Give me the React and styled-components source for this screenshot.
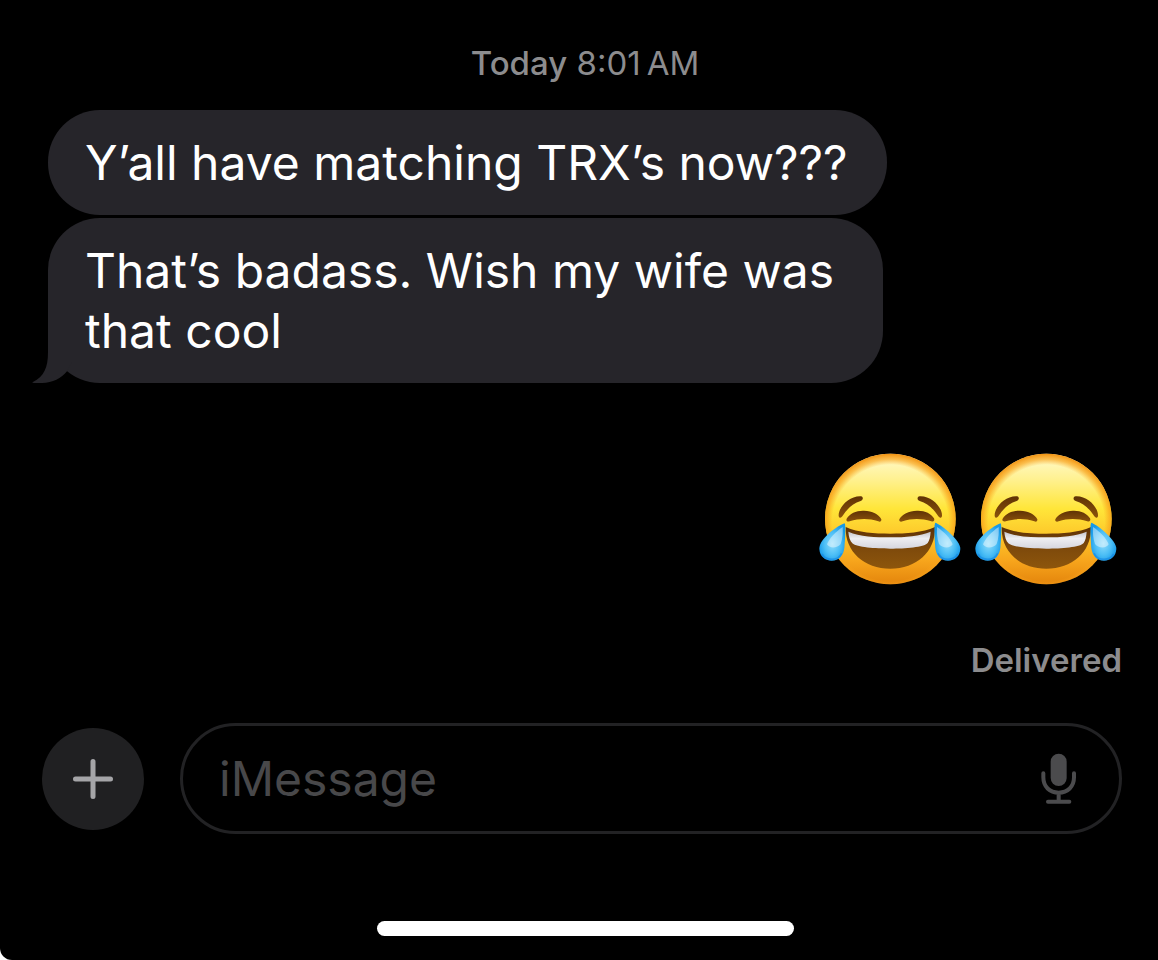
import React from 'react';
import styled, { createGlobalStyle } from 'styled-components';

const messages = [
  { id: 1, text: 'Y’all have matching TRX’s now???' },
  { id: 2, text: 'That’s badass. Wish my wife was that cool', last: true },
];

const App = () => {
  return (
    <>
      <GlobalStyle />
      <Screen>
        <Thread>
          <Timestamp>
            <Day>Today</Day> 8:01&thinsp;AM
          </Timestamp>
          <MessageList>
            {messages.map(({ id, text, last }) => (
              <Bubble key={id} $last={last}>
                {text}
                {last && <BubbleTail />}
              </Bubble>
            ))}
          </MessageList>
          <Reaction>
            <JoyFace id="joy-1" />
            <JoyFace id="joy-2" />
          </Reaction>
          <Status>Delivered</Status>
        </Thread>
        <Composer onSubmit={(event) => event.preventDefault()}>
          <AddButton type="button" aria-label="Add attachment">
            <svg width="40" height="40" viewBox="0 0 40 40" fill="none">
              <path
                d="M20 2.5V37.5M2.5 20H37.5"
                stroke="#a5a5a8"
                strokeWidth="5"
                strokeLinecap="round"
              />
            </svg>
          </AddButton>
          <Field>
            <Input type="text" placeholder="iMessage" aria-label="iMessage" />
            <MicButton type="button" aria-label="Dictate">
              <MicIcon />
            </MicButton>
          </Field>
        </Composer>
        <HomeBar>
          <HomeIndicator />
        </HomeBar>
      </Screen>
    </>
  );
};

const BubbleTail = () => (
  <Tail viewBox="36 377 120 156" aria-hidden="true">
    <path
      d="M84 377V440C84 488 72 513 39 530Q34 533 42 533H66C98 533 124 519 141 498L156 470V377Z"
      fill="#26252a"
    />
  </Tail>
);

const MicIcon = () => (
  <svg width="36" height="52" viewBox="62 115 108 156" fill="none">
    <rect x="91" y="117" width="48" height="97" rx="24" fill="#4b4b4d" />
    <path
      d="M69 176V188C69 216 88 234 115 234S161 216 161 188V176M115 234V260M83 261H147"
      stroke="#4b4b4d"
      strokeWidth="12"
      strokeLinecap="round"
    />
  </svg>
);

const JoyFace = ({ id }) => (
  <svg
    width="142"
    height="132"
    viewBox="28 40 426 396"
    role="img"
    aria-label="Face with tears of joy"
  >
    <defs>
      <linearGradient id={`${id}-skin`} x1="0" y1="0" x2="0" y2="1">
        <stop offset="0" stopColor="#fffad0" />
        <stop offset="0.2" stopColor="#fff18f" />
        <stop offset="0.42" stopColor="#ffe63a" />
        <stop offset="0.62" stopColor="#fdc82a" />
        <stop offset="0.82" stopColor="#f7a51c" />
        <stop offset="1" stopColor="#e4850c" />
      </linearGradient>
      <radialGradient id={`${id}-edge`} cx="0.5" cy="0.53" r="0.53">
        <stop offset="0.84" stopColor="#f9a41c" stopOpacity="0" />
        <stop offset="0.92" stopColor="#f9a41c" stopOpacity="0.7" />
        <stop offset="1" stopColor="#f0900e" stopOpacity="1" />
      </radialGradient>
      <linearGradient id={`${id}-teeth`} x1="0" y1="0" x2="0" y2="1">
        <stop offset="0" stopColor="#c4c4cb" />
        <stop offset="0.4" stopColor="#eeeef2" />
        <stop offset="1" stopColor="#d6d6de" />
      </linearGradient>
      <linearGradient id={`${id}-mouth`} x1="0" y1="0" x2="0" y2="1">
        <stop offset="0" stopColor="#5c3006" />
        <stop offset="0.45" stopColor="#7c480b" />
        <stop offset="1" stopColor="#8d560c" />
      </linearGradient>
      <linearGradient id={`${id}-brow`} x1="0" y1="0" x2="0" y2="1">
        <stop offset="0" stopColor="#5f3205" />
        <stop offset="1" stopColor="#8a520b" />
      </linearGradient>
      <radialGradient id={`${id}-tear`} cx="0.5" cy="0.55" r="0.55">
        <stop offset="0" stopColor="#8fdcfb" />
        <stop offset="0.55" stopColor="#4dbff6" />
        <stop offset="1" stopColor="#1699e8" />
      </radialGradient>
    </defs>
    <circle cx="242" cy="238" r="196" fill={`url(#${id}-skin)`} />
    <circle cx="242" cy="238" r="196" fill={`url(#${id}-edge)`} />
    <g fill={`url(#${id}-brow)`}>
      <path d="M87 228C86 203 119 168 154 170C162 172 161 181 153 184C129 191 113 207 98 230C94 236 88 236 87 228Z" />
      <path d="M397 228C398 203 365 168 330 170C321 172 322 181 330 184C354 191 371 207 386 230C390 236 396 236 397 228Z" />
      <path d="M111 237C120 221 141 212 163 213C188 214 208 224 215 239C216 245 211 248 206 245C177 236 150 236 120 245C113 247 108 243 111 237Z" />
      <path d="M269 239C277 224 297 214 322 213C345 212 364 221 373 236C376 243 372 247 365 245C335 236 307 236 279 245C273 248 267 245 269 239Z" />
    </g>
    <path
      d="M108 262C146 279 194 282 242 282S338 279 376 262C378 337 320 387 242 387S106 337 108 262Z"
      fill={`url(#${id}-mouth)`}
    />
    <path
      d="M116 276C151 291 197 293 242 293S331 290 363 276C362 291 359 303 354 310C343 323 287 327 242 327S142 323 128 311C121 303 117 291 116 276Z"
      fill={`url(#${id}-teeth)`}
    />
    <path
      d="M105 251C86 257 28 296 29 328C30 350 46 363 66 363C88 363 101 348 104 325C106 302 109 257 105 251Z"
      fill={`url(#${id}-tear)`}
    />
    <path
      d="M377 249C396 256 453 301 452 328C451 350 435 363 415 363C393 363 380 348 377 325C375 302 372 256 377 249Z"
      fill={`url(#${id}-tear)`}
    />
    <g fill="#ffffff" fillOpacity="0.45">
      <path d="M99 262C78 276 58 297 52 314C58 327 84 326 93 313C99 297 100 277 99 262Z" />
      <path d="M382 262C403 276 423 297 429 314C423 327 397 326 388 313C382 297 381 277 382 262Z" />
    </g>
    <g stroke="#0877dd" strokeOpacity="0.45" strokeWidth="5" fill="none">
      <path d="M37 343C43 354 54 359 66 359C80 359 91 352 96 341" />
      <path d="M444 343C438 354 427 359 415 359C401 359 390 352 385 341" />
    </g>
  </svg>
);

const GlobalStyle = createGlobalStyle`
  * {
    box-sizing: border-box;
  }

  body {
    margin: 0;
    background: white;
    font-family: Inter, 'Liberation Sans', sans-serif;
  }
`;

const Screen = styled.main`
  display: flex;
  flex-direction: column;
  min-height: 100vh;
  padding: 42px 36px 24px 42px;
  background: black;
  border-bottom-left-radius: 12px;
`;

const Thread = styled.section`
  display: flex;
  flex-direction: column;
  padding-left: 6px;
`;

const Timestamp = styled.p`
  margin: 0 0 26px;
  font-size: 33px;
  line-height: 42px;
  text-align: center;
  color: #8c8c8e;
`;

const Day = styled.span`
  font-weight: 500;
`;

const MessageList = styled.div`
  display: flex;
  flex-direction: column;
  align-items: flex-start;
  gap: 3px;
`;

const Bubble = styled.p`
  position: relative;
  max-width: ${({ $last }) => ($last ? '835px' : '100%')};
  margin: 0;
  padding: 23px 39px 22px 37px;
  border-radius: 52px;
  background: #26252a;
  color: white;
  font-size: 48px;
  line-height: 60px;
`;

const Tail = styled.svg`
  position: absolute;
  left: -16px;
  bottom: 0;
  width: 40px;
  height: 52px;
`;

const Reaction = styled.div`
  display: flex;
  justify-content: flex-end;
  gap: 14px;
  margin-top: 70px;
  padding-right: 5px;
`;

const Status = styled.p`
  margin: 54px 0 42px;
  font-size: 33px;
  font-weight: 600;
  line-height: 42px;
  text-align: right;
  color: #8c8c8e;
`;

const Composer = styled.form`
  display: flex;
  align-items: center;
  gap: 36px;
`;

const AddButton = styled.button`
  display: flex;
  flex-shrink: 0;
  align-items: center;
  justify-content: center;
  width: 102px;
  height: 102px;
  padding: 0;
  border: none;
  border-radius: 50%;
  background: #202022;
`;

const Field = styled.div`
  display: flex;
  flex: 1;
  align-items: center;
  height: 111px;
  padding: 0 42px 0 36px;
  border: 3px solid #222224;
  border-radius: 56px;
`;

const Input = styled.input`
  flex: 1;
  min-width: 0;
  padding: 0;
  border: none;
  outline: none;
  background: transparent;
  color: white;
  font-family: inherit;
  font-size: 48px;
  line-height: 60px;

  &::placeholder {
    color: #48484a;
    opacity: 1;
  }
`;

const MicButton = styled.button`
  display: flex;
  padding: 0;
  border: none;
  background: transparent;
`;

const HomeBar = styled.div`
  display: flex;
  justify-content: center;
  margin-top: auto;
  padding-left: 6px;
`;

const HomeIndicator = styled.div`
  width: 417px;
  height: 15px;
  border-radius: 8px;
  background: white;
`;

export default App;
